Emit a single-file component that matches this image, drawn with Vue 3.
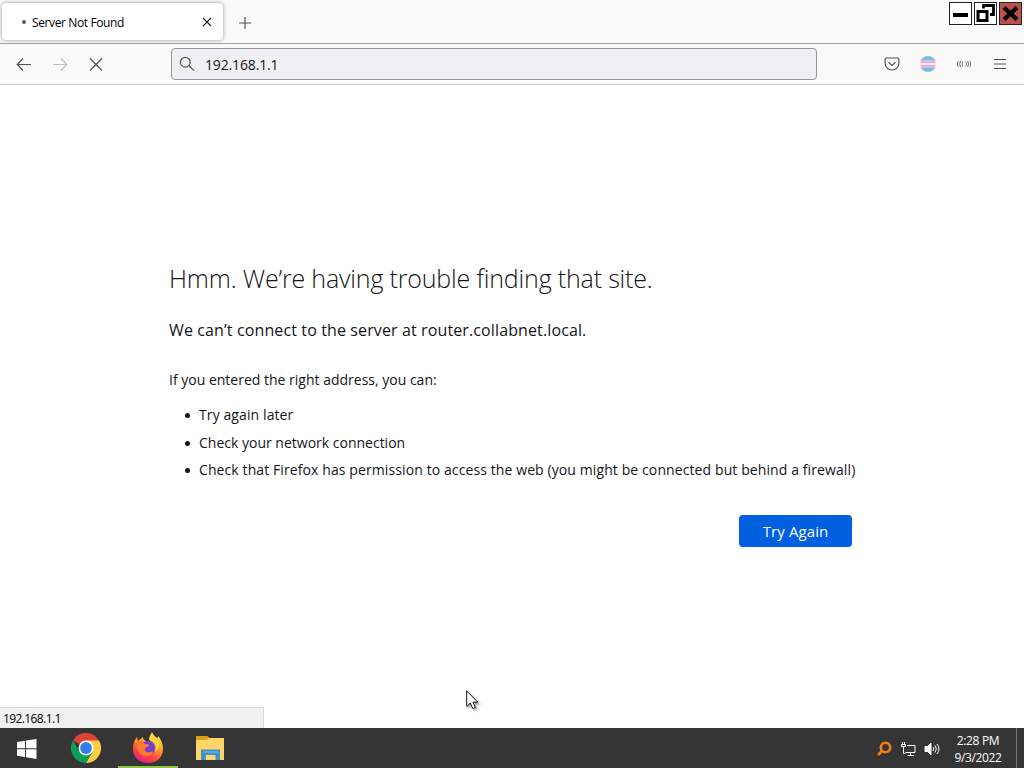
<template>
  <div class="desktop">
    <div class="browser">
      <header class="tabstrip">
        <div class="tab">
          <span class="tab-dot"></span>
          <span class="tab-title">{{ tab.title }}</span>
          <svg class="tab-close" viewBox="0 0 10 10"><path d="M1 1l8 8M9 1L1 9" /></svg>
        </div>
        <svg class="new-tab" viewBox="0 0 12 12"><path d="M6 0v12M0 6h12" /></svg>
        <div class="window-controls">
          <button class="win-btn" aria-label="Minimize">
            <svg viewBox="0 0 21 21"><path d="M3 12h15" stroke-width="4" /></svg>
          </button>
          <button class="win-btn" aria-label="Restore">
            <svg viewBox="0 0 21 21">
              <path d="M8.500 5.500V2.500h10v9H15" stroke-width="2.800" />
              <path d="M3 8.500h9v9H3z" stroke-width="3" />
            </svg>
          </button>
          <button class="win-btn close" aria-label="Close">
            <svg viewBox="0 0 21 21"><path d="M4 4.5l13 12M17 4.5l-13 12" stroke-width="4.4" /></svg>
          </button>
        </div>
      </header>

      <nav class="toolbar">
        <svg class="nav-icon" viewBox="0 0 16 16"><path d="M15 8.500H1.500M7 2.500L1.300 8.500 7 14.500" /></svg>
        <svg class="nav-icon disabled" viewBox="0 0 16 16"><path d="M1 8.500h13.500M9 2.500l5.700 6L9 14.500" /></svg>
        <svg class="nav-icon" viewBox="0 0 16 16"><path d="M2 2.500l12 12M14 2.500l-12 12" /></svg>
        <div class="urlbar">
          <svg viewBox="0 0 16 16"><circle cx="6.3" cy="6.2" r="4.9" /><path d="M10 9.8l5 4.8" /></svg>
          <span>{{ address }}</span>
        </div>
        <div class="actions">
          <svg class="pocket" viewBox="0 0 16 16">
            <path d="M2.600 2h10.800a1.500 1.500 0 0 1 1.500 1.500V7.500a6.900 6.500 0 0 1-13.800 0V3.500A1.500 1.500 0 0 1 2.600 2z" />
            <path d="M4.500 6.300L8 9.500l3.500-3.200" />
          </svg>
          <span class="flag"></span>
          <svg class="waves" viewBox="0 0 16 8">
            <path d="M2.300 1q-1.800 3 0 6M4.600 1q-1.800 3 0 6M6.800 1.500q-1.500 2.500 0 5M9.700 1.500q1.500 2.500 0 5M11.700 1q1.800 3 0 6M13.900 1q1.800 3 0 6" />
          </svg>
          <svg class="menu" viewBox="0 0 16 16"><path d="M2 3.500h12M2 8h12M2 12.500h12" /></svg>
        </div>
      </nav>

      <main class="page">
        <h1>Hmm. We’re having trouble finding that site.</h1>
        <p class="lead">We can’t connect to the server at router.collabnet.local.</p>
        <p class="hint">If you entered the right address, you can:</p>
        <ul>
          <li v-for="tip in tips" :key="tip">{{ tip }}</li>
        </ul>
        <div class="button-row">
          <button class="try-again">Try Again</button>
        </div>
      </main>
      <div class="status">{{ address }}</div>
    </div>

    <footer class="taskbar">
      <div class="task start">
        <svg viewBox="0 0 20 20" width="20" height="20">
          <path d="M0 3l8-1.200V9.300H0zM9 1.600L19.500 0v9.300H9zM0 10.300h8v7.600L0 16.800zM9 10.300h10.500V20L9 18.200z" fill="#fff" />
        </svg>
      </div>
      <div class="task chrome">
        <svg viewBox="0 0 30 30" width="30" height="30">
          <path d="M15 15L2 7.500A15 15 0 0 1 28 7.500z" fill="#db4437" />
          <path d="M28 7.500A15 15 0 0 1 15 30l6.500-11.300L15 7.500z" fill="#ffcd40" />
          <path d="M2 7.500A15 15 0 0 0 15 30l6.500-11.300L15 20 8.500 18.800z" fill="#0f9d58" />
          <circle cx="15" cy="15" r="7.500" fill="#fff" />
          <circle cx="15" cy="15" r="5.900" fill="#2f7de9" />
        </svg>
      </div>
      <div class="task firefox active">
        <svg viewBox="0 0 32 32" width="32" height="32">
          <defs>
            <linearGradient id="flame" x1=".8" y1="0" x2=".3" y2="1">
              <stop offset="0" stop-color="#fff14a" />
              <stop offset=".4" stop-color="#ffa32b" />
              <stop offset=".7" stop-color="#ff4b3c" />
              <stop offset="1" stop-color="#e6198e" />
            </linearGradient>
          </defs>
          <path d="M20 0c1 3 3 4 5 6 1 0 1-1 1-2 3 3 5 8 5 13 0 8-6 14-15 14S1 25 1 17c0-5 1-9 4-12l1 4 5-4c0 2 1 3 3 4l4 1c0-4 0-7 2-10z" fill="url(#flame)" />
          <path d="M11 11c3-3 9-3 11 1s1 8-2 10-7 1-9-2-2-6 0-9z" fill="#7540ce" />
          <path d="M5 10c3-1 6-1 8 2l4 .500c0 2-2 2.500-4 3.500-1 2 0 4 3 4.500 2 0 3-1 5-.500-2 4-6 5-9 4-5-1-8-7-7-14z" fill="#ff7a2e" />
          <path d="M17 8c6 0 9 6 6 12 5-3 5-9 2-13-2-2-4-3-5-6-2 3-3 4-3 7z" fill="#ffd83a" />
        </svg>
      </div>
      <div class="task explorer">
        <svg viewBox="0 0 28 24" width="28" height="24">
          <path d="M0 0h11l2 2h15v22H0z" fill="#ffd567" />
          <path d="M0 0h11l2 2-2 2H0z" fill="#d9a21b" />
          <path d="M5 13.500h19V24h-4.500v-5h-9.500v5H5z" fill="#3f91cc" />
          <path d="M7 15h15v2H7z" fill="#58a8dc" />
        </svg>
      </div>
      <div class="tray">
        <svg viewBox="0 0 16 16" width="16" height="16" class="search">
          <circle cx="9.500" cy="6.500" r="4.700" /><path d="M6 10l-4 4" />
        </svg>
        <svg viewBox="0 0 16 16" width="16" height="16" class="network">
          <path d="M7 4.500h8v7H5.500M10.500 12v2M7.500 14.500h6.500" />
          <path d="M2.500 1v2M4.500 1v2M1.500 3.500h4v2h-4zM3.500 6v6.500h2" />
        </svg>
        <svg viewBox="0 0 16 16" width="16" height="16" class="sound">
          <path d="M1 5.500h2v5H1zM3.500 5.500L7 2v12l-3.500-3.500z" fill="#fff" />
          <path d="M9 6q1.500 2 0 4M11 4.500q2.700 3.500 0 7M13 3q4 5 0 10" />
        </svg>
        <div class="clock">
          <span>{{ clock.time }}</span>
          <span>{{ clock.date }}</span>
        </div>
        <div class="show-desktop"></div>
      </div>
    </footer>

    <svg class="cursor" viewBox="0 0 13 20">
      <path d="M.7 1v15.500l3.600-3.400 2.500 5.500 2.600-1.200-2.500-5.200h5z" />
    </svg>
  </div>
</template>

<script setup>
import { ref } from 'vue';

const tab = ref({ title: 'Server Not Found' });
const address = ref('192.168.1.1');
const clock = ref({ time: '2:28 PM', date: '9/3/2022' });

const tips = [
  'Try again later',
  'Check your network connection',
  'Check that Firefox has permission to access the web (you might be connected but behind a firewall)',
];
</script>

<style>
body { margin: 0; overflow: hidden; }
</style>

<style scoped>
.desktop {
  position: relative;
  display: flex; flex-direction: column;
  width: 1024px; height: 768px;
  font-family: "Open Sans", "Noto Sans", sans-serif;
  color: #15141a; background: #fff;
}
.desktop * { box-sizing: border-box; }
svg { display: block; fill: none; stroke: none; flex: none; }
button { border: 0; padding: 0; font-family: inherit; }
.browser { flex: 1; display: flex; flex-direction: column; min-height: 0; }

/* Tabs */
.tabstrip {
  height: 44px; display: flex; align-items: flex-start;
  background: #fafafa; border-bottom: 1px solid #a2a2a6;
}
.tab {
  width: 221px; height: 37px; margin: 3px 0 0 2px; padding: 1px 11px 0 20px;
  display: flex; align-items: center;
  background: #fff; border-radius: 4px; box-shadow: 0 0 4px rgba(0, 0, 0, 0.4);
}
.tab-dot { width: 4px; height: 4px; border-radius: 50%; background: #5b5b66; margin-right: 6px; }
.tab-title { padding-top: 1px; font-size: 12px; letter-spacing: -0.38px; color: #000; }
.tab-close { width: 10px; height: 10px; margin-left: auto; stroke: #222; stroke-width: 1.1; }
.new-tab { width: 12px; height: 12px; margin: 17px 0 0 16px; stroke: #55555b; stroke-width: 1.2; }
.window-controls { display: flex; gap: 2px; margin: 2px 2px 0 auto; }
.win-btn { width: 23px; height: 23px; border: 1px solid #222; background: #fff; }
.win-btn svg { width: 21px; height: 21px; stroke: #000; }
.win-btn.close { background: #bd4f51; }

/* Navigation toolbar */
.toolbar {
  height: 41px; display: flex; align-items: center; padding-left: 16px;
  background: #fafafa; border-bottom: 1px solid #cccccf;
}
.nav-icon { width: 16px; height: 16px; margin-right: 20px; stroke: #505056; stroke-width: 1.2; }
.nav-icon.disabled { stroke: #bebec2; }
.urlbar {
  width: 646px; height: 32px; margin-left: 47px; padding-left: 7px;
  display: flex; align-items: center; gap: 10px;
  background: #f0f0f4; border: 1px solid #949499; border-radius: 4px;
  font-size: 14px; letter-spacing: -0.15px;
}
.urlbar svg { width: 16px; height: 16px; stroke: #55555c; stroke-width: 1.3; }
.actions { display: flex; align-items: center; gap: 20px; margin: 0 16px 0 auto; }
.actions svg { width: 16px; height: 16px; stroke: #505056; stroke-width: 1.2; }
.actions .waves { height: 8px; stroke: #6b6b70; stroke-width: 0.9; }
.flag {
  width: 16px; height: 16px; border-radius: 50%;
  background: linear-gradient(#7fb9e6 0 22%, #e6b3d8 22% 42%, #fbf2f8 42% 58%, #e6b3d8 58% 78%, #7fb9e6 78%);
}

/* Error page */
.page { flex: 1; width: 683px; margin-left: 169px; padding-top: 174px; }
h1 { margin: 0; font-size: 25px; line-height: 38px; font-weight: 300; letter-spacing: -0.17px; white-space: nowrap; }
p { margin: 0; white-space: nowrap; }
.lead { margin-top: 22px; font-size: 16px; line-height: 22px; letter-spacing: 0.12px; }
.hint { margin-top: 29px; font-size: 14px; line-height: 20px; }
ul {
  margin: 11px 0 0; padding: 0; list-style: none;
  font-size: 14px; line-height: 27.5px; letter-spacing: 0.1px; white-space: nowrap;
}
li { display: flex; align-items: center; }
li::before {
  content: ''; flex: none; width: 5px; height: 5px; margin: 2px 9px 0 16px;
  border-radius: 50%; background: #15141a;
}
li:nth-child(2) { letter-spacing: 0; }
.button-row { display: flex; justify-content: flex-end; margin-top: 31px; }
.try-again {
  width: 113px; height: 32px; border-radius: 4px;
  background: #0060df; color: #fbfbfe; font-size: 15px; letter-spacing: 0.1px;
}
.status {
  width: 264px; height: 21px; padding-left: 3px;
  background: #f0f0f0; border: solid #dadada; border-width: 1px 1px 0 0;
  font-size: 12px; line-height: 21px; letter-spacing: -0.6px; color: #000;
}

/* Taskbar */
.taskbar { height: 40px; display: flex; background: #353535; }
.task { width: 60px; display: flex; align-items: center; justify-content: center; }
.start { width: 53px; padding-top: 2px; }
.chrome { width: 65px; }
.firefox { padding-top: 1px; border-bottom: 2px solid #8bc34a; }
.explorer { width: 64px; }
.tray { margin-left: auto; display: flex; align-items: center; }
.tray svg { margin-right: 8px; margin-top: 2px; stroke: #fff; stroke-width: 1; }
.tray .search { stroke: #f57c14; stroke-width: 2.6; }
.tray .sound { margin-right: 0; }
.clock {
  width: 76px; display: flex; flex-direction: column; align-items: center; padding-top: 2px;
  font-size: 12px; line-height: 17px; letter-spacing: -0.35px; color: #fff;
}
.show-desktop { width: 8px; height: 40px; border-left: 1px solid #77777a; }

.cursor {
  position: absolute; left: 466px; top: 690px; width: 13px; height: 20px;
  fill: #fff; stroke: #111; stroke-width: 1;
  filter: drop-shadow(2px 2px 1px rgba(0, 0, 0, 0.35));
}
</style>
